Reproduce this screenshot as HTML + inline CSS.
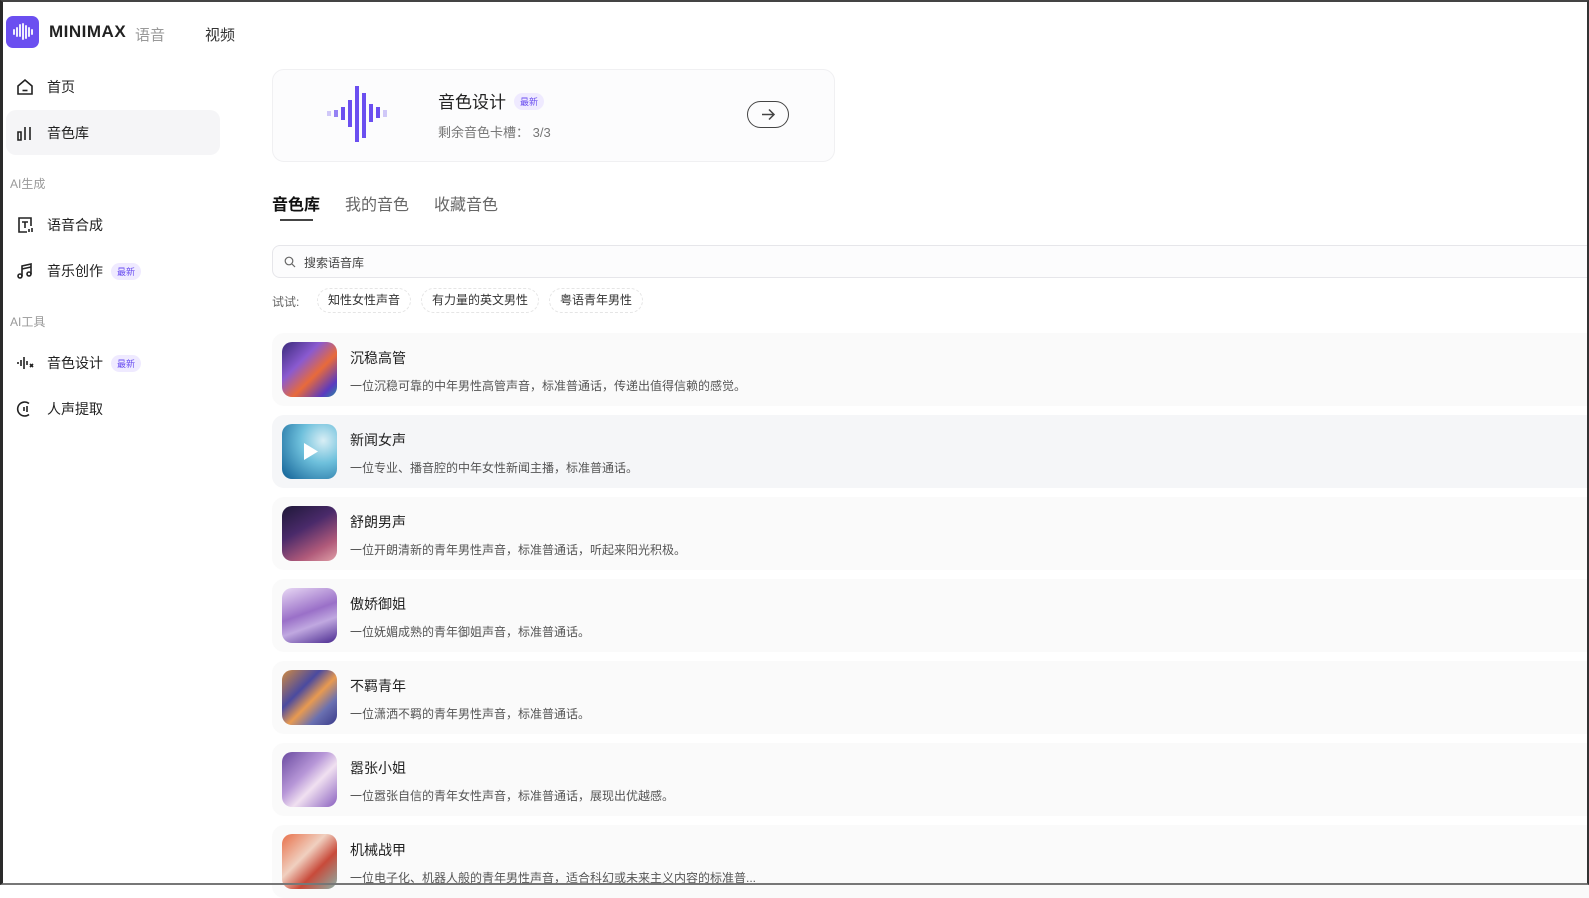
<!DOCTYPE html>
<html><head><meta charset="utf-8"><style>
*{margin:0;padding:0;box-sizing:border-box}
body{width:1589px;height:885px;overflow:hidden;background:#fff;font-family:"Liberation Sans","Noto Sans CJK SC",sans-serif;color:#222;position:relative}
.frame{position:absolute;inset:0;border-top:2px solid #444;border-right:2px solid #333;border-bottom:2px solid #777;border-left:3px solid #2a2a2a;pointer-events:none;z-index:10}
.abs{position:absolute}
.logo{left:6px;top:16px;width:33px;height:32px;background:#6b4ff0;border-radius:7px}
.nav{position:absolute;left:16px;display:flex;align-items:center;font-size:14px;color:#222}
.nav svg{width:18px;height:18px;margin-right:13px}
.sec{position:absolute;left:10px;font-size:12px;color:#999}
.badge{display:inline-block;font-size:9px;color:#6b4ff0;background:#efeaff;border-radius:9px;padding:2px 6px;margin-left:8px}
.card{left:272px;top:69px;width:563px;height:93px;border:1px solid #f0f0f2;border-radius:12px;background:#fcfcfd}
.tab{position:absolute;top:191px;font-size:16px;color:#666}
.search{left:272px;top:245px;width:1330px;height:33px;border:1px solid #e6e6ea;border-radius:8px;background:#fcfcfd}
.chip{position:absolute;top:288px;height:25px;border:1px dashed #e5e5e5;border-radius:13px;font-size:12px;color:#333;padding:0 10px;line-height:23px}
.row{position:absolute;left:272px;width:1330px;height:73px;border-radius:12px;background:#fafafa}
.th{position:absolute;left:10px;top:9px;width:55px;height:55px;border-radius:10px}
.t{position:absolute;left:78px;top:15px;font-size:14px;color:#222}
.d{position:absolute;left:78px;top:44px;font-size:12px;color:#555}
</style></head><body>
<div class="frame"></div>
<div class="abs logo"><svg width="33" height="32" viewBox="0 0 33 32" stroke="#fff" stroke-width="2" stroke-linecap="round" fill="none"><path d="M8 14v4M11 12v8M14 9v11M17 8v15M20 10v12M23 12v8M26 14v4" opacity=".9"/></svg></div>
<div class="abs" style="left:49px;top:22px;font-size:17px;font-weight:bold;letter-spacing:.5px">MINIMAX</div>
<div class="abs" style="left:135px;top:24px;font-size:15px;color:#999">语音</div>
<div class="abs" style="left:205px;top:24px;font-size:15px;color:#333">视频</div>

<div class="nav" style="top:77px"><svg viewBox="0 0 18 18" fill="none" stroke="#222" stroke-width="1.6"><path d="M2 8l7-6 7 6v8H2z"/><path d="M6.5 12.5h5"/></svg>首页</div>
<div class="abs" style="left:6px;top:110px;width:214px;height:45px;background:#f5f5f7;border-radius:10px"></div>
<div class="nav" style="top:123px"><svg viewBox="0 0 18 18" fill="none" stroke="#222" stroke-width="1.6"><path d="M2 8h3v8H2zM9 3v13M14 3v13"/></svg>音色库</div>
<div class="sec" style="top:175px">AI生成</div>
<div class="nav" style="top:215px"><svg viewBox="0 0 18 18" fill="none" stroke="#222" stroke-width="1.6"><path d="M11 16H3V2h12v8"/><path d="M6 6h6M9 6v6M13 13v3M16 12v4"/></svg>语音合成</div>
<div class="nav" style="top:261px"><svg viewBox="0 0 18 18" fill="none" stroke="#222" stroke-width="1.6"><path d="M6 14V4l9-2v10"/><circle cx="4" cy="14" r="2"/><circle cx="13" cy="12" r="2"/><path d="M6 7l9-2"/></svg>音乐创作<span class="badge">最新</span></div>
<div class="sec" style="top:313px">AI工具</div>
<div class="nav" style="top:353px"><svg viewBox="0 0 18 18" fill="none" stroke="#222" stroke-width="1.6"><path d="M2 8v2M5 6v6M8 3v12M11 7v4M14 10l3 3M14 13l3-3"/></svg>音色设计<span class="badge">最新</span></div>
<div class="nav" style="top:399px"><svg viewBox="0 0 18 18" fill="none" stroke="#222" stroke-width="1.6"><path d="M13 3.5A7 7 0 1 0 13 14.5"/><path d="M8 7v4M11 6v6"/></svg>人声提取</div>

<div class="abs card">
<svg class="abs" style="left:54px;top:8px" width="70" height="70" viewBox="0 0 70 70"><g fill="#6b4ff0"><rect x="0" y="33" width="4" height="5" opacity=".3"/><rect x="7" y="32" width="4" height="7" opacity=".7"/><rect x="14" y="29" width="4" height="13"/><rect x="21" y="22" width="4" height="27"/><rect x="28" y="8" width="4" height="56"/><rect x="35" y="15" width="4" height="45"/><rect x="42" y="26" width="4" height="18"/><rect x="49" y="29" width="4" height="11"/><rect x="56" y="32" width="4" height="7" opacity=".3"/></g></svg>
<div class="abs" style="left:165px;top:18px;font-size:17px">音色设计<span class="badge" style="vertical-align:3px">最新</span></div>
<div class="abs" style="left:165px;top:52px;font-size:13px;color:#777">剩余音色卡槽： 3/3</div>
<div class="abs" style="left:474px;top:31px;width:42px;height:27px;border:1.5px solid #444;border-radius:14px"><svg width="40" height="25" viewBox="0 0 40 25" fill="none" stroke="#444" stroke-width="1.5"><path d="M14 12.5h12M21 7.5l5 5-5 5"/></svg></div>
</div>

<div class="tab" style="left:272px;color:#111;font-weight:bold">音色库</div>
<div class="abs" style="left:280px;top:219px;width:33px;height:2px;background:#444"></div>
<div class="tab" style="left:345px">我的音色</div>
<div class="tab" style="left:434px">收藏音色</div>

<div class="abs search"><svg class="abs" style="left:11px;top:10px" width="12" height="12" viewBox="0 0 12 12" fill="none" stroke="#666" stroke-width="1.2"><circle cx="5" cy="5" r="3.8"/><path d="M8 8l3 3"/></svg><span class="abs" style="left:31px;top:8px;font-size:12px;color:#444">搜索语音库</span></div>
<div class="abs" style="left:272px;top:293px;font-size:12px;color:#666">试试:</div>
<div class="chip" style="left:317px">知性女性声音</div>
<div class="chip" style="left:421px">有力量的英文男性</div>
<div class="chip" style="left:549px">粤语青年男性</div>

<div class="row" style="top:333px"><div class="th" style="background:linear-gradient(135deg,#3a2a7a,#8a5ad0 35%,#e86a3a 60%,#5a3ac0 85%,#2a8aa0)"></div><div class="t">沉稳高管</div><div class="d">一位沉稳可靠的中年男性高管声音，标准普通话，传递出值得信赖的感觉。</div></div>
<div class="row" style="top:415px;background:#f5f6f8"><div class="th" style="background:radial-gradient(circle at 75% 30%,#d8eef5,#6ec0dc 40%,#1f6fa0 90%)"><svg width="55" height="55" viewBox="0 0 55 55"><path d="M22 19v17l14-8.5z" fill="#fff"/></svg></div><div class="t">新闻女声</div><div class="d">一位专业、播音腔的中年女性新闻主播，标准普通话。</div></div>
<div class="row" style="top:497px"><div class="th" style="background:linear-gradient(150deg,#1e1838,#4a2a6a 40%,#b05a7a 75%,#e0a0a8)"></div><div class="t">舒朗男声</div><div class="d">一位开朗清新的青年男性声音，标准普通话，听起来阳光积极。</div></div>
<div class="row" style="top:579px"><div class="th" style="background:linear-gradient(160deg,#e8d8f4,#9a70c8 45%,#c0a8e0 65%,#4a2a90)"></div><div class="t">傲娇御姐</div><div class="d">一位妩媚成熟的青年御姐声音，标准普通话。</div></div>
<div class="row" style="top:661px"><div class="th" style="background:linear-gradient(135deg,#d08a40,#4a4aa0 35%,#e89a50 55%,#6a70b0 75%,#3a3a8a)"></div><div class="t">不羁青年</div><div class="d">一位潇洒不羁的青年男性声音，标准普通话。</div></div>
<div class="row" style="top:743px"><div class="th" style="background:linear-gradient(135deg,#6a4aa0,#b898d8 40%,#f0e0f0 60%,#8a60c0)"></div><div class="t">嚣张小姐</div><div class="d">一位嚣张自信的青年女性声音，标准普通话，展现出优越感。</div></div>
<div class="row" style="top:825px"><div class="th" style="background:linear-gradient(135deg,#e8704a,#f0d0c0 40%,#c84a3a 65%,#8ab0a8)"></div><div class="t">机械战甲</div><div class="d">一位电子化、机器人般的青年男性声音，适合科幻或未来主义内容的标准普...</div></div>
</body></html>
